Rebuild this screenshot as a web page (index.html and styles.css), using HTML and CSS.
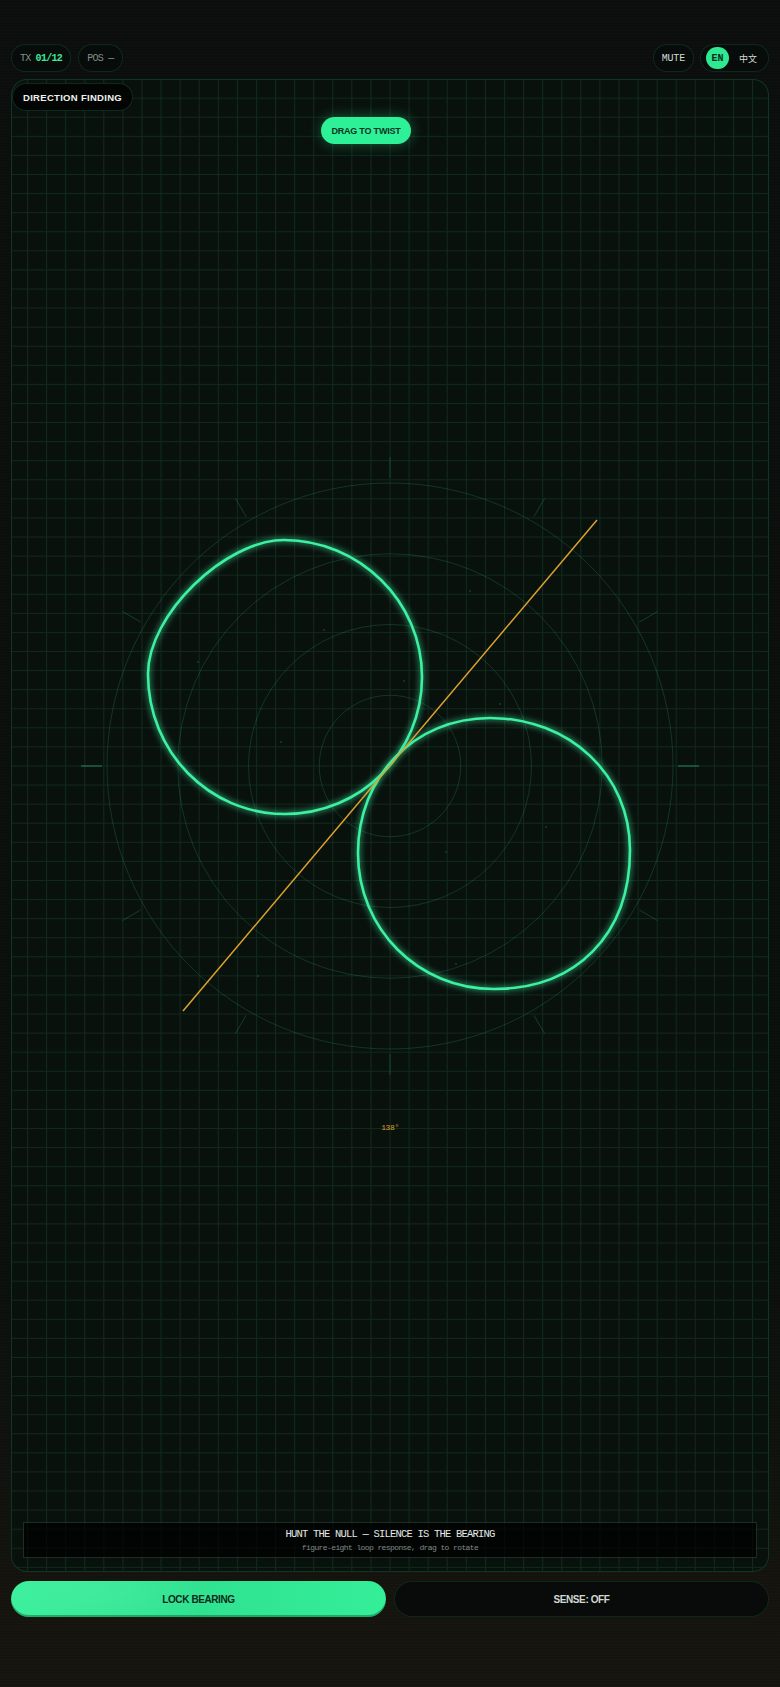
FILE: index.html
```html
<!DOCTYPE html>
<html lang="en">
<head>
<meta charset="utf-8">
<title>Direction Finding</title>
<link rel="stylesheet" href="styles.css">
</head>
<body>
<div class="app">
  <header class="topbar">
    <div class="group">
      <div class="pill"><span class="dim">TX</span><span class="hi">01/12</span></div>
      <div class="pill"><span class="dim">POS —</span></div>
    </div>
    <div class="group group-right">
      <div class="pill mute">MUTE</div>
      <div class="pill lang"><span class="lang-on">EN</span><span class="lang-off">中文</span></div>
    </div>
  </header>

  <main class="panel">
    <svg class="stage" viewBox="12 80 756 1491" width="756" height="1491" xmlns="http://www.w3.org/2000/svg">
      <defs>
        <pattern id="grid" patternUnits="userSpaceOnUse" x="389.5" y="765.5" width="19.08" height="19.08">
          <path d="M0.5 0 V19.08 M0 0.5 H19.08" class="grid-line"/>
        </pattern>
        <filter id="glow" x="-20%" y="-20%" width="140%" height="140%">
          <feGaussianBlur stdDeviation="3" result="b"/>
          <feMerge><feMergeNode in="b"/><feMergeNode in="SourceGraphic"/></feMerge>
        </filter>
      </defs>
      <rect x="12" y="80" width="756" height="1491" fill="url(#grid)"/>
      <g class="rings">
        <circle cx="390" cy="766" r="70.75"/>
        <circle cx="390" cy="766" r="141.5"/>
        <circle cx="390" cy="766" r="212.25"/>
        <circle cx="390" cy="766" r="283"/>
      </g>
      <g class="ticks">
        <line x1="639.4" y1="910" x2="657.6" y2="920.5"/>
        <line x1="534" y1="1015.4" x2="544.5" y2="1033.6"/>
        <line x1="390" y1="1054" x2="390" y2="1075"/>
        <line x1="246" y1="1015.4" x2="235.5" y2="1033.6"/>
        <line x1="140.6" y1="910" x2="122.4" y2="920.5"/>
        <line x1="140.6" y1="622" x2="122.4" y2="611.5"/>
        <line x1="246" y1="516.6" x2="235.5" y2="498.4"/>
        <line x1="390" y1="478" x2="390" y2="457"/>
        <line x1="534" y1="516.6" x2="544.5" y2="498.4"/>
        <line x1="639.4" y1="622" x2="657.6" y2="611.5"/>
      </g>
      <g class="ticks-main">
        <line x1="678" y1="766" x2="699" y2="766"/>
        <line x1="102" y1="766" x2="81" y2="766"/>
      </g>
      <g class="specks">
        <circle cx="324" cy="630" r="1"/>
        <circle cx="500" cy="704" r="1"/>
        <circle cx="470" cy="591" r="1"/>
        <circle cx="281" cy="742" r="1"/>
        <circle cx="198" cy="662" r="1"/>
        <circle cx="404" cy="681" r="1"/>
        <circle cx="446" cy="852" r="1"/>
        <circle cx="546" cy="827" r="1"/>
        <circle cx="456" cy="964" r="1"/>
        <circle cx="258" cy="976" r="1"/>
      </g>
      <g class="lobes" filter="url(#glow)">
        <path d="M284 540 C226 540 148 614 148 674 C148 752 209 814 285 814 C361 814 422 753 422 677 C422 601 359 540 284 540 Z"/>
        <path d="M490 718 C570 718 630 775 630 850 C630 935 576 989 494 989 C418 989 358 929 358 853 C358 777 414 718 490 718 Z"/>
      </g>
      <line class="bearing" x1="183" y1="1011" x2="597" y2="520"/>
      <text class="deg" x="390" y="1130">138°</text>
    </svg>

    <div class="tag">DIRECTION FINDING</div>
    <div class="hint">DRAG TO TWIST</div>

    <div class="readout">
      <div class="readout-title">HUNT THE NULL — SILENCE IS THE BEARING</div>
      <div class="readout-sub">figure-eight loop response, drag to rotate</div>
    </div>
  </main>

  <footer class="actions">
    <button class="btn btn-primary">LOCK BEARING</button>
    <button class="btn btn-ghost">SENSE: OFF</button>
  </footer>
</div>
</body>
</html>
```

FILE: styles.css
```css
* { box-sizing: border-box; }

html, body {
  margin: 0;
  padding: 0;
}

body {
  width: 780px;
  height: 1687px;
  overflow: hidden;
  background:
    repeating-linear-gradient(180deg, rgba(255,255,255,0.012) 0 1px, transparent 1px 3px),
    linear-gradient(180deg, #0b0e0c 0%, #0b0f0c 75%, #12120d 90%, #16140e 100%);
  font-family: "Liberation Sans", Arial, sans-serif;
  color: #d6ddd9;
}

.app {
  padding: 44px 11px 0 11px;
}

.topbar {
  display: flex;
  justify-content: space-between;
  align-items: center;
  height: 28px;
}

.group {
  display: flex;
  gap: 7px;
}

.group-right {
  gap: 6px;
}

.pill {
  height: 28px;
  display: inline-flex;
  align-items: center;
  gap: 5px;
  padding: 0 8px;
  border-radius: 14px;
  border: 1px solid rgba(60, 240, 160, 0.13);
  background: rgba(6, 10, 8, 0.7);
  font-family: "Liberation Mono", "DejaVu Sans Mono", monospace;
  font-size: 10px;
  letter-spacing: -0.7px;
  white-space: pre;
}

.dim { color: #85918b; }
.hi { color: #3ce89a; font-weight: 700; }

.mute {
  color: #d2d9d5;
  padding: 0 8px;
  letter-spacing: -0.2px;
}

.lang {
  gap: 0;
  padding: 0 11px 0 5px;
}

.lang-on {
  width: 23px;
  height: 22px;
  border-radius: 11px;
  background: #2ee892;
  color: #06301c;
  font-weight: 700;
  display: inline-flex;
  align-items: center;
  justify-content: center;
  letter-spacing: 0;
}

.lang-off {
  margin-left: 10px;
  color: #d2d9d5;
  font-family: "Noto Sans CJK SC", sans-serif;
  font-size: 9px;
  letter-spacing: 0;
}

.panel {
  position: relative;
  margin-top: 7px;
  height: 1493px;
  border: 1px solid rgba(60, 240, 160, 0.16);
  border-radius: 16px;
  background: #09110d;
  overflow: hidden;
  display: flex;
  flex-direction: column;
  align-items: flex-start;
}

.stage {
  position: absolute;
  inset: 0;
  display: block;
}

.grid-line {
  stroke: rgba(70, 220, 150, 0.12);
  stroke-width: 1;
  fill: none;
}

.rings circle {
  fill: none;
  stroke: rgba(60, 240, 160, 0.16);
  stroke-width: 1;
}

.ticks line {
  stroke: rgba(60, 240, 160, 0.2);
  stroke-width: 1;
}

.ticks-main line {
  stroke: rgba(60, 240, 160, 0.5);
  stroke-width: 1;
}

.specks circle {
  fill: rgba(60, 240, 160, 0.2);
}

.lobes path {
  fill: none;
  stroke: #3cf0a2;
  stroke-width: 2.6;
}

.bearing {
  stroke: #dfa22e;
  stroke-width: 1.5;
}

.deg {
  fill: #d9a030;
  font-family: "Liberation Mono", monospace;
  font-size: 8px;
  text-anchor: middle;
  letter-spacing: -0.4px;
}

.tag {
  position: relative;
  margin-top: 3px;
  height: 28px;
  display: flex;
  align-items: center;
  padding: 0 10px;
  border-radius: 14px;
  border: 1px solid rgba(60, 240, 160, 0.16);
  background: #030504;
  color: #eef1ef;
  font-weight: 700;
  font-size: 9.5px;
  letter-spacing: 0.3px;
}

.hint {
  position: absolute;
  left: 309px;
  top: 37px;
  width: 90px;
  height: 27px;
  border-radius: 14px;
  background: #2ef096;
  box-shadow: 0 0 14px rgba(46, 240, 150, 0.35);
  color: #07341f;
  font-weight: 700;
  font-size: 9px;
  letter-spacing: -0.2px;
  display: flex;
  align-items: center;
  justify-content: center;
}

.readout {
  position: relative;
  margin: auto 11px 13px 11px;
  align-self: stretch;
  height: 36px;
  border: 1px solid rgba(120, 200, 160, 0.22);
  background: rgba(0, 0, 0, 0.72);
  display: flex;
  flex-direction: column;
  align-items: center;
  justify-content: center;
  gap: 3px;
  font-family: "Liberation Mono", "DejaVu Sans Mono", monospace;
}

.readout-title {
  color: #e4e9e6;
  font-size: 10.5px;
  letter-spacing: -0.8px;
  line-height: 12px;
}

.readout-sub {
  color: #7f8a85;
  font-size: 8px;
  letter-spacing: -0.6px;
  line-height: 9px;
}

.actions {
  margin-top: 9px;
  display: grid;
  grid-template-columns: 1fr 1fr;
  gap: 8px;
}

.btn {
  height: 36px;
  border-radius: 18px;
  font-family: "Liberation Sans", Arial, sans-serif;
  font-weight: 700;
  font-size: 10px;
  letter-spacing: -0.4px;
  cursor: pointer;
}

.btn-primary {
  border: none;
  background:
    radial-gradient(120px 40px at 25% 20%, rgba(255,255,255,0.06), transparent),
    linear-gradient(90deg, #3bf09c 0%, #2fe290 50%, #35ee98 100%);
  box-shadow: inset 0 -2px 0 rgba(0, 90, 45, 0.45);
  color: #0b2a1b;
}

.btn-ghost {
  border: 1px solid rgba(60, 240, 160, 0.12);
  background: #080b09;
  color: #d2d9d5;
}
```
